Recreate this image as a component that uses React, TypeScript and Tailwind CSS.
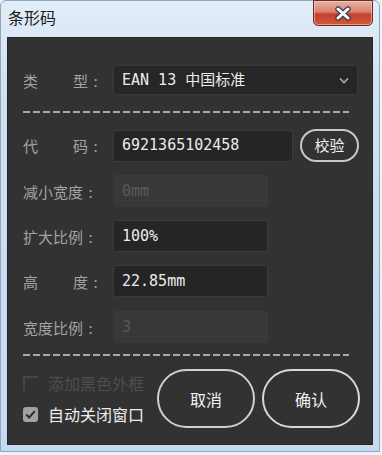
import React from "react";

const cjk = "font-['Noto_Sans_CJK_SC',sans-serif]";
const mono = "font-['DejaVu_Sans_Mono','Noto_Sans_CJK_SC',monospace]";

function Colon() {
  return <span className="w-[15px] text-center">:</span>;
}

function Label({ a, b, text }: { a?: string; b?: string; text?: string }) {
  if (text) {
    return (
      <div className={`w-[80px] shrink-0 flex text-[15px] leading-none text-[#a3a3a3] ${cjk}`}>
        <span>{text}</span>
        <Colon />
      </div>
    );
  }
  return (
    <div className={`w-[80px] shrink-0 flex justify-between text-[15px] leading-none text-[#a3a3a3] ${cjk}`}>
      <span>{a}</span>
      <span className="flex">
        <span>{b}</span>
        <Colon />
      </span>
    </div>
  );
}

function Dashed() {
  return (
    <div className="ml-[15px] w-[326px] h-[2px] bg-[repeating-linear-gradient(90deg,#a8a8a8_0px,#a8a8a8_7px,transparent_7px,transparent_10px)]" />
  );
}

function Field({ value, disabled, w }: { value: string; disabled?: boolean; w: string }) {
  return (
    <div
      className={`${w} h-[32px] flex items-center pl-[8px] rounded-[3px] border text-[15px] ${mono} ${
        disabled
          ? "bg-[#383838] border-[#3a3a3a] text-[#5a5a5a]"
          : "bg-[#252525] border-[#3b3b3b] text-[#ececec]"
      }`}
    >
      {value}
    </div>
  );
}

export default function App() {
  return (
    <div className="w-[382px] h-[455px] bg-[#eef3f9] overflow-hidden">
      <div className="relative w-[380px] h-[452px] border border-[#8ea6c2] rounded-t-[6px] bg-[linear-gradient(180deg,#e3edf8_0%,#cfe0f1_20%,#c6dbef_100%)] flex flex-col">
        {/* title bar */}
        <div className="h-[36px] shrink-0 flex items-start pl-[7px] pt-[6px]">
          <span className={`text-[16px] leading-[20px] text-[#1a1a1a] ${cjk}`}>条形码</span>
        </div>
        {/* close button */}
        <div className="absolute right-[6px] top-[-1px] w-[60px] h-[26px] rounded-b-[5px] border border-[#6e2b22] bg-[linear-gradient(180deg,#e6b3a6_0%,#d9826f_45%,#c3412b_55%,#cf5a3e_100%)] flex items-center justify-center shadow-[inset_0_0_0_1px_rgba(255,220,210,0.5)]">
          <svg width="22" height="15" viewBox="0 0 22 15">
            <path d="M6 3 L16 12 M16 3 L6 12" stroke="#3b3f4a" strokeWidth="5.5" strokeLinecap="round" />
            <path d="M6 3 L16 12 M16 3 L6 12" stroke="#ffffff" strokeWidth="3" strokeLinecap="round" />
          </svg>
        </div>
        {/* panel */}
        <div className="mx-[6px] mb-[6px] flex-1 bg-[#323232] border border-[#262626] flex flex-col">
          {/* type */}
          <div className="mt-[27px] pl-[15px] flex items-center">
            <Label a="类" b="型" />
            <div className={`ml-[10px] w-[245px] h-[30px] flex items-center justify-between pl-[8px] pr-[8px] rounded-[3px] bg-[#262626] border border-[#3a3a3a] text-[15px] text-[#ececec] ${mono}`}>
              <span>EAN 13 中国标准</span>
              <svg width="10" height="7" viewBox="0 0 10 7">
                <path d="M1 1.5 L5 5.5 L9 1.5" stroke="#b0b0b0" strokeWidth="1.6" fill="none" />
              </svg>
            </div>
          </div>
          <div className="mt-[16px]">
            <Dashed />
          </div>
          {/* code */}
          <div className="mt-[16px] pl-[15px] flex items-center h-[33px]">
            <Label a="代" b="码" />
            <div className="ml-[10px]">
              <Field value="6921365102458" w="w-[180px]" />
            </div>
            <div className={`ml-[7px] w-[59px] h-[33px] rounded-full border-2 border-[#c8c8c8] flex items-center justify-center text-[15px] text-[#f0f0f0] ${cjk}`}>
              校验
            </div>
          </div>
          <div className="mt-[13px] pl-[15px] flex items-center">
            <Label text="减小宽度" />
            <div className="ml-[10px]">
              <Field value="0mm" disabled w="w-[155px]" />
            </div>
          </div>
          <div className="mt-[13px] pl-[15px] flex items-center">
            <Label text="扩大比例" />
            <div className="ml-[10px]">
              <Field value="100%" w="w-[155px]" />
            </div>
          </div>
          <div className="mt-[13px] pl-[15px] flex items-center">
            <Label a="高" b="度" />
            <div className="ml-[10px]">
              <Field value="22.85mm" w="w-[155px]" />
            </div>
          </div>
          <div className="mt-[14px] pl-[15px] flex items-center">
            <Label text="宽度比例" />
            <div className="ml-[10px]">
              <Field value="3" disabled w="w-[155px]" />
            </div>
          </div>
          <div className="mt-[11px]">
            <Dashed />
          </div>
          {/* bottom */}
          <div className="mt-[13px] pl-[15px] flex items-center">
            <div className={`w-[134px] flex flex-col gap-[15px] text-[16px] leading-none ${cjk}`}>
              <div className="flex items-center gap-[10px] text-[#4e4e4e]">
                <span className="w-[15px] h-[15px] border-t-2 border-l-2 border-[#464646]" />
                <span>添加黑色外框</span>
              </div>
              <div className="flex items-center gap-[10px] text-[#ededed]">
                <span className="w-[15px] h-[15px] rounded-[3px] bg-[#a2a2a2] flex items-center justify-center">
                  <svg width="11" height="9" viewBox="0 0 11 9">
                    <path d="M1.2 4.5 L4.2 7.5 L9.8 1.2" stroke="#2b2b2b" strokeWidth="2" fill="none" />
                  </svg>
                </span>
                <span>自动关闭窗口</span>
              </div>
            </div>
            <div className={`w-[98px] h-[59px] rounded-full border-2 border-[#d0d0d0] flex items-center justify-center text-[16px] text-[#f2f2f2] ${cjk}`}>
              取消
            </div>
            <div className={`ml-[7px] w-[98px] h-[59px] rounded-full border-2 border-[#d8d8d8] flex items-center justify-center text-[16px] text-[#f2f2f2] ${cjk}`}>
              确认
            </div>
          </div>
        </div>
      </div>
    </div>
  );
}
